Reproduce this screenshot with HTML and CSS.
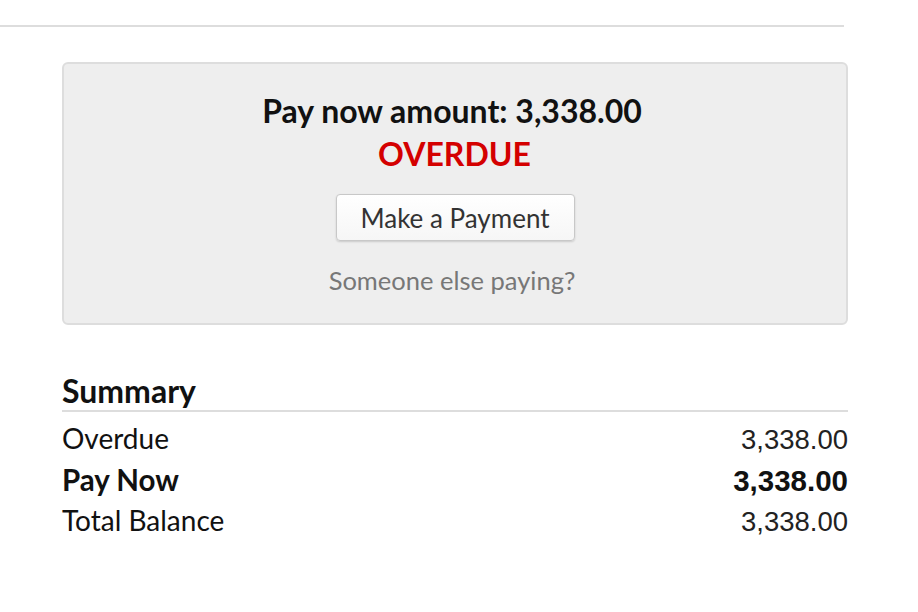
FILE: index.html
```html
<!DOCTYPE html>
<html>
<head>
<meta charset="utf-8">
<link rel="stylesheet" href="styles.css">
</head>
<body>
<div class="page">
  <hr class="top-rule">
  <div class="content">
    <div class="pay-panel">
      <div class="pay-title">Pay now amount: 3,338.00</div>
      <div class="pay-status">OVERDUE</div>
      <button class="pay-btn">Make a Payment</button>
      <div class="someone">Someone else paying?</div>
    </div>
    <div class="summary">
      <h2 class="summary-title">Summary</h2>
      <div class="rows">
        <div class="row"><span class="label">Overdue</span><span class="num">3,338.00</span></div>
        <div class="row bold"><span class="label">Pay Now</span><span class="num">3,338.00</span></div>
        <div class="row"><span class="label">Total Balance</span><span class="num">3,338.00</span></div>
      </div>
    </div>
  </div>
</div>
</body>
</html>
```

FILE: styles.css
```css
* { box-sizing: border-box; }
html, body { margin: 0; padding: 0; background: #fff; }
body { font-family: Lato, "Open Sans", sans-serif; color: #111; }
.page { width: 918px; height: 612px; }
.top-rule {
  margin: 0;
  margin-top: 25px;
  width: 844px;
  border: 0;
  border-top: 2px solid #ddd;
  height: 0;
}
.content { padding: 0 70px 0 62px; }
.pay-panel {
  margin-top: 35px;
  background: #eee;
  border: 2px solid #ddd;
  border-radius: 6px;
  height: 263px;
  display: flex;
  flex-direction: column;
  align-items: center;
  padding-top: 27px;
  padding-right: 6px;
}
.pay-title { font-weight: 700; font-size: 32px; line-height: 40px; color: #111; }
.pay-status { font-weight: 700; font-size: 32px; line-height: 40px; color: #d40000; margin-top: 3px; margin-left: 5px; }
.pay-btn {
  margin-top: 20px;
  margin-left: 6px;
  width: 239px;
  height: 47px;
  font-family: Lato, sans-serif;
  font-size: 26px;
  color: #333;
  background: linear-gradient(#fff, #f6f6f6);
  border: 1px solid #c8c8c8;
  border-radius: 4px;
  box-shadow: 0 1px 2px rgba(0,0,0,0.15);
  padding: 0;
}
.someone { margin-top: 21px; font-size: 25.5px; line-height: 36px; color: #777; }
.summary { margin-top: 47px; }
.summary-title {
  margin: 0;
  font-size: 32px;
  font-weight: 700;
  line-height: 38px;
  border-bottom: 2px solid #ddd;
}
.rows { padding-top: 6px; }
.row {
  display: flex;
  justify-content: space-between;
  align-items: baseline;
  font-size: 28px;
  line-height: 41px;
  height: 41px;
}
.num { font-family: "Liberation Sans", Arial, sans-serif; font-size: 27.5px; color: #222; }
.row.bold { font-size: 29.5px; }
.row.bold .label { font-weight: 700; }
.row.bold .num { font-weight: 700; font-size: 29.5px; color: #111; }
```
